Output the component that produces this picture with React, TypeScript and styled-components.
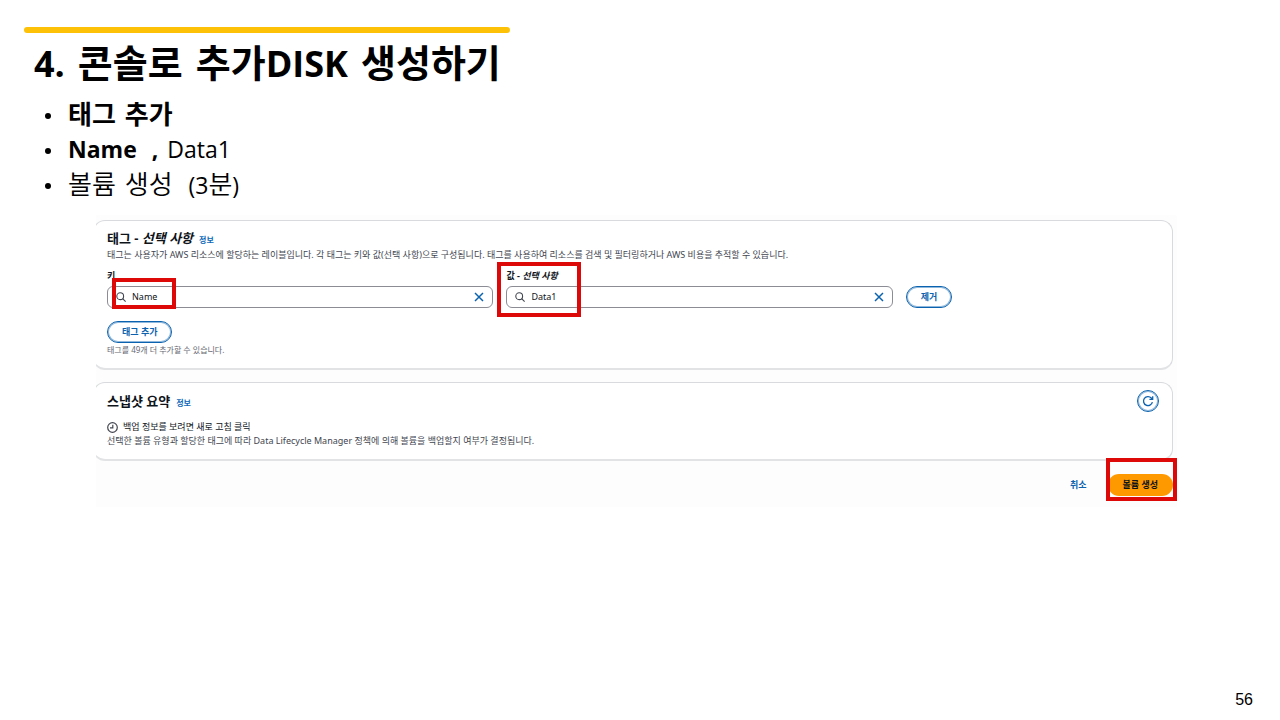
import React from "react";
import styled, { createGlobalStyle } from "styled-components";

const GlobalStyle = createGlobalStyle`
  * { box-sizing: border-box; }
  body {
    margin: 0;
    background: #ffffff;
    color: #000000;
    font-family: "Noto Sans", "Noto Sans CJK KR", sans-serif;
  }
  h1, h2, p, ul { margin: 0; padding: 0; }
  button, input { font: inherit; }
`;

const Slide = styled.main`
  min-height: 100vh;
  display: flex;
  flex-direction: column;
  padding-top: 27px;
`;

const AccentBar = styled.div`
  width: 38%;
  height: 6px;
  margin-left: 24px;
  border-radius: 3px;
  background: #fdc108;
`;

const Title = styled.h1`
  display: flex;
  flex-wrap: wrap;
  align-items: baseline;
  gap: 0 13px;
  margin: 1px 0 0 34px;
  font-family: "Open Sans", "Noto Sans CJK KR", sans-serif;
  font-size: 38px;
  line-height: 56px;
  font-weight: 700;
`;

const TitleLatin = styled.span`
  font-size: 36px;
`;

const Points = styled.ul`
  margin: 5px 0 0 44px;
  list-style: none;
  font-family: "Open Sans", "Noto Sans CJK KR", sans-serif;
`;

const Point = styled.li<{ $bold?: boolean }>`
  display: flex;
  align-items: center;
  gap: 9px;
  height: 35px;
  font-size: 26px;
  line-height: 35px;
  font-weight: ${(p) => (p.$bold ? 700 : 350)};
  white-space: pre;

  &::before {
    content: "";
    width: 6px;
    height: 6px;
    margin: 2px 8px 0 1px;
    border-radius: 50%;
    background: #000000;
  }
`;

const PointLatin = styled.span<{ $bold?: boolean }>`
  font-size: 23px;
  font-weight: ${(p) => (p.$bold ? 700 : 400)};
`;

const Console = styled.section`
  margin: 13px 103px 0 96px;
  padding: 5px 4px 11px 0;
  background: #fdfdfd;
`;

const CardClip = styled.div`
  overflow: hidden;
  margin-bottom: 12px;

  &:last-of-type { margin-bottom: 0; }
`;

const Card = styled.section`
  margin-left: -3px;
  padding: 7px 13px 11px;
  border: 1px solid #d8dadd;
  border-bottom: 2px solid #e2e3e5;
  border-radius: 12px;
  background: #ffffff;
`;

const CardHeader = styled.header`
  display: flex;
  align-items: center;
  justify-content: space-between;
`;

const HeadingGroup = styled.div`
  display: flex;
  align-items: baseline;
  gap: 6px;
`;

const Heading = styled.h2`
  font-size: 13px;
  line-height: 20px;
  font-weight: 700;
  color: #0f141a;
`;

const InfoLink = styled.a`
  font-size: 8px;
  line-height: 12px;
  font-weight: 700;
  color: #0b68b8;
  text-decoration: none;
`;

const Description = styled.p`
  font-size: 9px;
  line-height: 14px;
  color: #424650;
`;

const Hint = styled.p`
  font-size: 8px;
  line-height: 14px;
  color: #656871;
`;

const TagRow = styled.div`
  display: grid;
  grid-template-columns: 29fr 29fr 19fr;
  gap: 13px;
  align-items: end;
  margin: 7px 0 13px;
`;

const Field = styled.div`
  position: relative;
`;

const FieldLabel = styled.label`
  display: block;
  font-size: 9px;
  line-height: 14px;
  font-weight: 700;
  color: #0f141a;
`;

const Control = styled.div`
  display: flex;
  align-items: center;
  gap: 6px;
  height: 22px;
  margin-top: 3px;
  padding: 0 8px;
  border: 1px solid #8c8c94;
  border-radius: 6px;
  background: #ffffff;
`;

const TextInput = styled.input`
  flex: 1;
  min-width: 0;
  padding: 0;
  border: 0;
  outline: 0;
  background: transparent;
  font-size: 9px;
  line-height: 14px;
  color: #0f141a;
`;

const IconButton = styled.button`
  display: flex;
  padding: 0;
  border: 0;
  background: none;
  color: #0b62ae;
`;

const PillButton = styled.button`
  display: block;
  height: 22px;
  padding: 0 14px;
  border: 1px solid #0b62ae;
  border-radius: 11px;
  box-shadow: inset 0 0 0 1px #8fb8dc;
  background: #ffffff;
  font-size: 9px;
  line-height: 16px;
  font-weight: 700;
  color: #0b62ae;
`;

const RefreshButton = styled.button`
  display: flex;
  align-items: center;
  justify-content: center;
  width: 22px;
  height: 22px;
  padding: 0;
  border: 1px solid #0b62ae;
  border-radius: 50%;
  box-shadow: inset 0 0 0 1px #8fb8dc;
  background: #ffffff;
  color: #0b62ae;
`;

const Status = styled.p`
  display: flex;
  align-items: center;
  gap: 5px;
  margin-top: 8px;
  font-size: 9px;
  line-height: 14px;
  color: #0f141a;
`;

const Actions = styled.footer`
  display: flex;
  align-items: center;
  justify-content: flex-end;
  gap: 21px;
  margin-top: 13px;
`;

const CancelButton = styled.button`
  padding: 0;
  border: 0;
  background: none;
  font-size: 9px;
  line-height: 16px;
  font-weight: 700;
  color: #0b62ae;
`;

const PrimaryWrap = styled.div`
  position: relative;
`;

const PrimaryButton = styled.button`
  display: block;
  height: 22px;
  padding: 0 15px;
  border: 0;
  border-radius: 11px;
  background: #ff9900;
  font-size: 9px;
  line-height: 16px;
  font-weight: 700;
  color: #0f141a;
`;

const Highlight = styled.span<{ $top: number; $left: number; $w: number; $h: number }>`
  position: absolute;
  top: ${(p) => p.$top}px;
  left: ${(p) => p.$left}px;
  width: ${(p) => p.$w}px;
  height: ${(p) => p.$h}px;
  border: 4px solid #dd0808;
  pointer-events: none;
`;

const PageNumber = styled.footer`
  margin: auto 27px 10px auto;
  font-family: "Liberation Sans", sans-serif;
  font-size: 16px;
  line-height: 20px;
`;

const SearchIcon = () => (
  <svg width="10" height="10" viewBox="0 0 10 10" fill="none" stroke="#424650" strokeWidth="1.1">
    <circle cx="4.2" cy="4.2" r="3.4" />
    <path d="M6.7 6.7L9.6 9.6" />
  </svg>
);

const CloseIcon = () => (
  <svg width="10" height="10" viewBox="0 0 10 10" fill="none" stroke="currentColor" strokeWidth="1.5">
    <path d="M1 1L9 9M9 1L1 9" />
  </svg>
);

const RefreshIcon = () => (
  <svg width="12" height="12" viewBox="0 0 12 12" fill="none" stroke="currentColor" strokeWidth="1.3">
    <path d="M10.4 7.2A4.5 4.5 0 1 1 9.3 3L10.2 4" />
    <path d="M10.7 1.2V4.4H7.4" />
  </svg>
);

const ClockIcon = () => (
  <svg width="11" height="11" viewBox="0 0 11 11" fill="none" stroke="#424650" strokeWidth="1.2">
    <circle cx="5.5" cy="5.5" r="4.8" />
    <path d="M5.8 2.7V5.8H3" />
  </svg>
);

type TagFieldProps = {
  id: string;
  label: React.ReactNode;
  value: string;
  children: React.ReactNode;
};

const TagField = ({ id, label, value, children }: TagFieldProps) => (
  <Field>
    <FieldLabel htmlFor={id}>{label}</FieldLabel>
    <Control>
      <SearchIcon />
      <TextInput id={id} defaultValue={value} />
      <IconButton type="button" aria-label="지우기">
        <CloseIcon />
      </IconButton>
    </Control>
    {children}
  </Field>
);

export default function App() {
  return (
    <>
      <GlobalStyle />
      <Slide>
        <AccentBar />
        <Title>
          <TitleLatin>4.</TitleLatin>
          <span>콘솔로</span>
          <span>추가<TitleLatin>DISK</TitleLatin></span>
          <span>생성하기</span>
        </Title>
        <Points>
          <Point $bold>
            <span>태그</span>
            <span>추가</span>
          </Point>
          <Point>
            <PointLatin $bold>Name</PointLatin>
            <PointLatin $bold>{" ,"}</PointLatin>
            <PointLatin>Data1</PointLatin>
          </Point>
          <Point>
            <span>볼륨</span>
            <span>생성</span>
            <span>{" "}<PointLatin>(3</PointLatin>분<PointLatin>)</PointLatin></span>
          </Point>
        </Points>

        <Console>
          <CardClip>
            <Card>
              <CardHeader>
                <HeadingGroup>
                  <Heading>
                    태그 - <em>선택 사항</em>
                  </Heading>
                  <InfoLink href="#tags">정보</InfoLink>
                </HeadingGroup>
              </CardHeader>
              <Description>
                태그는 사용자가 AWS 리소스에 할당하는 레이블입니다. 각 태그는 키와 값(선택 사항)으로 구성됩니다. 태그를 사용하여 리소스를 검색 및 필터링하거나 AWS 비용을 추적할 수 있습니다.
              </Description>
              <TagRow>
                <TagField id="tag-key" label="키" value="Name">
                  <Highlight $top={9} $left={5} $w={64} $h={31} />
                </TagField>
                <TagField id="tag-value" label={<>값 - <em>선택 사항</em></>} value="Data1">
                  <Highlight $top={-7} $left={-9} $w={84} $h={55} />
                </TagField>
                <div>
                  <PillButton type="button">제거</PillButton>
                </div>
              </TagRow>
              <PillButton type="button">태그 추가</PillButton>
              <Hint>태그를 49개 더 추가할 수 있습니다.</Hint>
            </Card>
          </CardClip>

          <CardClip>
            <Card>
              <CardHeader>
                <HeadingGroup>
                  <Heading>스냅샷 요약</Heading>
                  <InfoLink href="#snapshot">정보</InfoLink>
                </HeadingGroup>
                <RefreshButton type="button" aria-label="새로 고침">
                  <RefreshIcon />
                </RefreshButton>
              </CardHeader>
              <Status>
                <ClockIcon />
                백업 정보를 보려면 새로 고침 클릭
              </Status>
              <Description>
                선택한 볼륨 유형과 할당한 태그에 따라 Data Lifecycle Manager 정책에 의해 볼륨을 백업할지 여부가 결정됩니다.
              </Description>
            </Card>
          </CardClip>

          <Actions>
            <CancelButton type="button">취소</CancelButton>
            <PrimaryWrap>
              <PrimaryButton type="button">볼륨 생성</PrimaryButton>
              <Highlight $top={-16} $left={-2} $w={71} $h={43} />
            </PrimaryWrap>
          </Actions>
        </Console>

        <PageNumber>56</PageNumber>
      </Slide>
    </>
  );
}
